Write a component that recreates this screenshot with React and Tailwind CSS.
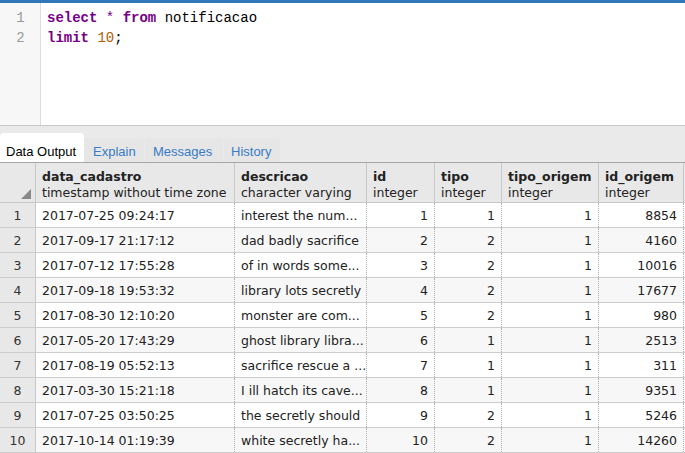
import React from "react";

const cols = [
  { name: "data_cadastro", type: "timestamp without time zone", w: "w-[199px]", align: "left" },
  { name: "descricao", type: "character varying", w: "w-[132px]", align: "left" },
  { name: "id", type: "integer", w: "w-[68px]", align: "right" },
  { name: "tipo", type: "integer", w: "w-[67px]", align: "right" },
  { name: "tipo_origem", type: "integer", w: "w-[97px]", align: "right" },
  { name: "id_origem", type: "integer", w: "w-[85px]", align: "right" },
];

const rows = [
  ["2017-07-25 09:24:17", "interest the num...", 1, 1, 1, 8854],
  ["2017-09-17 21:17:12", "dad badly sacrifice", 2, 2, 1, 4160],
  ["2017-07-12 17:55:28", "of in words some...", 3, 2, 1, 10016],
  ["2017-09-18 19:53:32", "library lots secretly", 4, 2, 1, 17677],
  ["2017-08-30 12:10:20", "monster are com...", 5, 2, 1, 980],
  ["2017-05-20 17:43:29", "ghost library libra...", 6, 1, 1, 2513],
  ["2017-08-19 05:52:13", "sacrifice rescue a ...", 7, 1, 1, 311],
  ["2017-03-30 15:21:18", "I ill hatch its cave...", 8, 1, 1, 9351],
  ["2017-07-25 03:50:25", "the secretly should", 9, 2, 1, 5246],
  ["2017-10-14 01:19:39", "white secretly ha...", 10, 2, 1, 14260],
];

export default function App() {
  return (
    <div className="w-[685px] h-[453px] overflow-hidden bg-white flex flex-col">
      <div className="h-[3px] bg-[#2f77b8] shrink-0" />
      {/* editor */}
      <div className="h-[122px] flex shrink-0 font-['Liberation_Mono',monospace] text-[14px] leading-[20px]">
        <div className="w-[41px] bg-[#f7f7f7] border-r border-[#dddddd] pt-[5px] text-[#999999] text-center">
          <div className="pl-[1px]">1</div>
          <div className="pl-[1px]">2</div>
        </div>
        <div className="pt-[5px] pl-[6px] text-black">
          <div>
            <span className="font-bold text-[#770088]">select</span>{" "}
            <span className="text-[#770088]">*</span>{" "}
            <span className="font-bold text-[#770088]">from</span> notificacao
          </div>
          <div>
            <span className="font-bold text-[#770088]">limit</span>{" "}
            <span className="text-[#b35c00]">10</span>;
          </div>
        </div>
      </div>
      {/* tab strip */}
      <div className="h-[37px] shrink-0 bg-[#eaeaea] border-t border-[#c8c8c8] flex items-end font-['Liberation_Sans',Arial,sans-serif] text-[13px]">
        <div className="h-[29px] w-[84px] bg-white rounded-t-[4px] flex items-end pb-[1px] pl-[6px] text-black">
          Data Output
        </div>
        <div className="h-[24px] w-[60px] flex items-end pb-[1px] pl-[9px] text-[#3a7bc6] bg-[#e6e6e6] rounded-t-[3px]">Explain</div>
        <div className="h-[24px] w-[78px] ml-[1px] flex items-end pb-[1px] pl-[8px] text-[#3a7bc6] bg-[#e6e6e6] rounded-t-[3px]">Messages</div>
        <div className="h-[24px] w-[56px] ml-[1px] flex items-end pb-[1px] pl-[7px] text-[#3a7bc6] bg-[#e6e6e6] rounded-t-[3px]">History</div>
      </div>
      {/* grid */}
      <div className="flex-1 font-['DejaVu_Sans',Verdana,sans-serif] text-[12.5px] text-[#222222]">
        <div className="h-[41px] flex bg-[#e8e8e8] border-t border-[#a6a6a6] border-b border-b-[#c8c8c8]">
          <div className="w-[36px] shrink-0 border-r border-[#c8c8c8] relative">
            <div className="absolute right-[4px] bottom-[3px] w-0 h-0 border-l-[10px] border-l-transparent border-b-[10px] border-b-[#888888]" />
          </div>
          {cols.map((c) => (
            <div key={c.name} className={`${c.w} shrink-0 border-r border-[#c8c8c8] pl-[6px] pt-[6px] leading-[16px] whitespace-nowrap overflow-hidden`}>
              <div className="font-bold">{c.name}</div>
              <div>{c.type}</div>
            </div>
          ))}
        </div>
        {rows.map((r, i) => (
          <div key={i} className={`h-[25px] flex border-b border-[#cccccc] ${i % 2 === 1 ? "bg-[#f7f7f7]" : "bg-white"}`}>
            <div className="w-[36px] shrink-0 bg-[#e8e8e8] border-r border-[#c8c8c8] flex items-center justify-center pt-[2px] text-[#333333]">
              {i + 1}
            </div>
            {r.map((v, j) => (
              <div
                key={j}
                className={`${cols[j].w} shrink-0 border-r border-dotted border-[#b0b0b0] flex items-center pt-[2px] whitespace-nowrap overflow-hidden ${cols[j].align === "right" ? "justify-end pr-[6px]" : "pl-[6px]"}`}
              >
                {v}
              </div>
            ))}
          </div>
        ))}
      </div>
    </div>
  );
}
